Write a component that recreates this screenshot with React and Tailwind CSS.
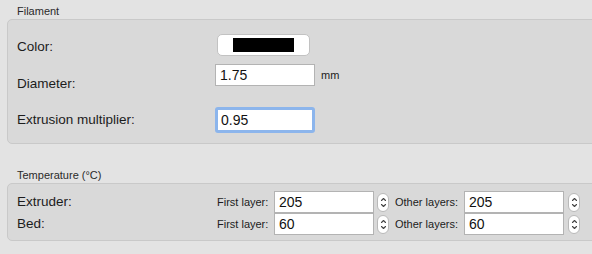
import React from 'react';

const font = { fontFamily: '"Liberation Sans", Arial, sans-serif' };

function Stepper() {
  return (
    <div className="flex h-[19px] w-[12px] flex-col items-center justify-center rounded-full border border-[#b9b9b9] bg-white">
      <svg width="7" height="13" viewBox="0 0 7 13" fill="none" stroke="#444" strokeWidth="1.1" strokeLinecap="round" strokeLinejoin="round">
        <path d="M1.5 4.5 L3.5 2.5 L5.5 4.5" />
        <path d="M1.5 8.5 L3.5 10.5 L5.5 8.5" />
      </svg>
    </div>
  );
}

function Field({ value, className = '' }) {
  return (
    <div className={`flex h-[22px] w-[100px] items-center border border-[#b3b3b3] bg-white pl-[4px] text-[14px] text-[#111] ${className}`}>
      {value}
    </div>
  );
}

function TempRow({ label, first, other }) {
  return (
    <div className="flex h-[22px] items-center">
      <div className="w-[200px] text-[13.5px] text-[#1c1c1c]">{label}</div>
      <div className="w-[57px] text-[11px] text-[#1c1c1c]">First layer:</div>
      <Field value={first} />
      <div className="ml-[3px]"><Stepper /></div>
      <div className="ml-[6px] w-[69px] text-[11px] text-[#1c1c1c]">Other layers:</div>
      <Field value={other} />
      <div className="ml-[4px]"><Stepper /></div>
    </div>
  );
}

export default function App() {
  return (
    <div className="h-[254px] w-[592px] overflow-hidden bg-[#e3e3e3]" style={font}>
      <div className="pl-[17px] pt-[5px] text-[11px] leading-[13px] text-[#2a2a2a]">Filament</div>
      <div className="ml-[7px] mt-[1px] h-[125px] w-[600px] rounded-[5px] border border-[#c9c9c9] bg-[#d9d9d9] pl-[9px] pt-[14px]">
        <div className="flex items-start">
          <div className="w-[200px] pt-[5px] text-[13.5px] leading-[16px] text-[#1c1c1c]">Color:</div>
          <div className="flex h-[22px] w-[93px] items-center justify-center rounded-[5px] border border-[#c2c2c2] bg-white">
            <div className="h-[14px] w-[61px] bg-black" />
          </div>
        </div>
        <div className="mt-[8px] flex items-start">
          <div className="w-[198px] pt-[12px] text-[13.5px] leading-[16px] text-[#1c1c1c]">Diameter:</div>
          <Field value="1.75" />
          <div className="ml-[6px] pt-[3px] text-[11px] text-[#1c1c1c]">mm</div>
        </div>
        <div className="mt-[15px] flex items-start">
          <div className="w-[198px] pt-[5px] text-[13.5px] leading-[16px] text-[#1c1c1c]">Extrusion multiplier:</div>
          <div className="flex h-[26px] w-[100px] items-center rounded-[3px] border-[3px] border-[#8cb5ec] bg-white pl-[3px] text-[14px] text-[#111]">
            0.95
          </div>
        </div>
      </div>
      <div className="pl-[17px] pt-[25px] text-[11px] leading-[13px] text-[#2a2a2a]">Temperature (°C)</div>
      <div className="ml-[7px] mt-[1px] h-[58px] w-[600px] rounded-[5px] border border-[#c9c9c9] bg-[#d9d9d9] pl-[9px] pt-[7px]">
        <TempRow label="Extruder:" first="205" other="205" />
        <TempRow label="Bed:" first="60" other="60" />
      </div>
    </div>
  );
}
